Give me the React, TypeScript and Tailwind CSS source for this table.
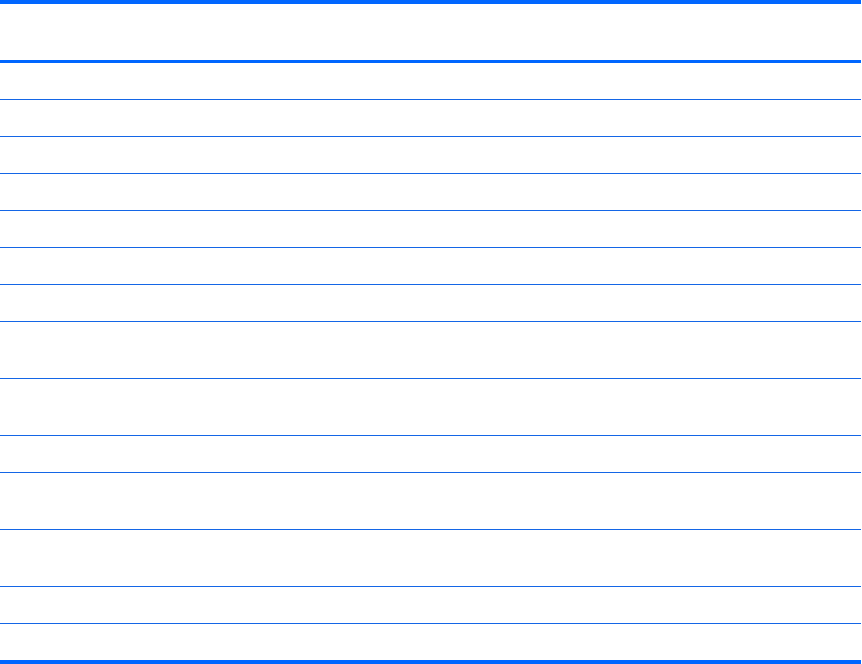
import React from 'react';

// row heights in px, thin rule included
const rows = [37, 37, 37, 37, 37, 37, 37, 57, 57, 37, 57, 57, 37];

const App = () => {
  return (
    <div className="w-[862px] h-[664px] bg-white overflow-hidden">
      <div className="w-[861px] flex flex-col">
        {/* Header */}
        <div className="h-[63px] border-t-4 border-b-[3px] border-[#0066ff]" />

        {/* Body */}
        {rows.map((h, i) => (
          <div
            key={i}
            className={`border-b border-[#1466e6] ${h === 57 ? 'h-[57px]' : 'h-[37px]'}`}
          />
        ))}
        <div className="h-[40px] border-b-4 border-[#0066ff]" />
      </div>
    </div>
  );
};

export default App;
